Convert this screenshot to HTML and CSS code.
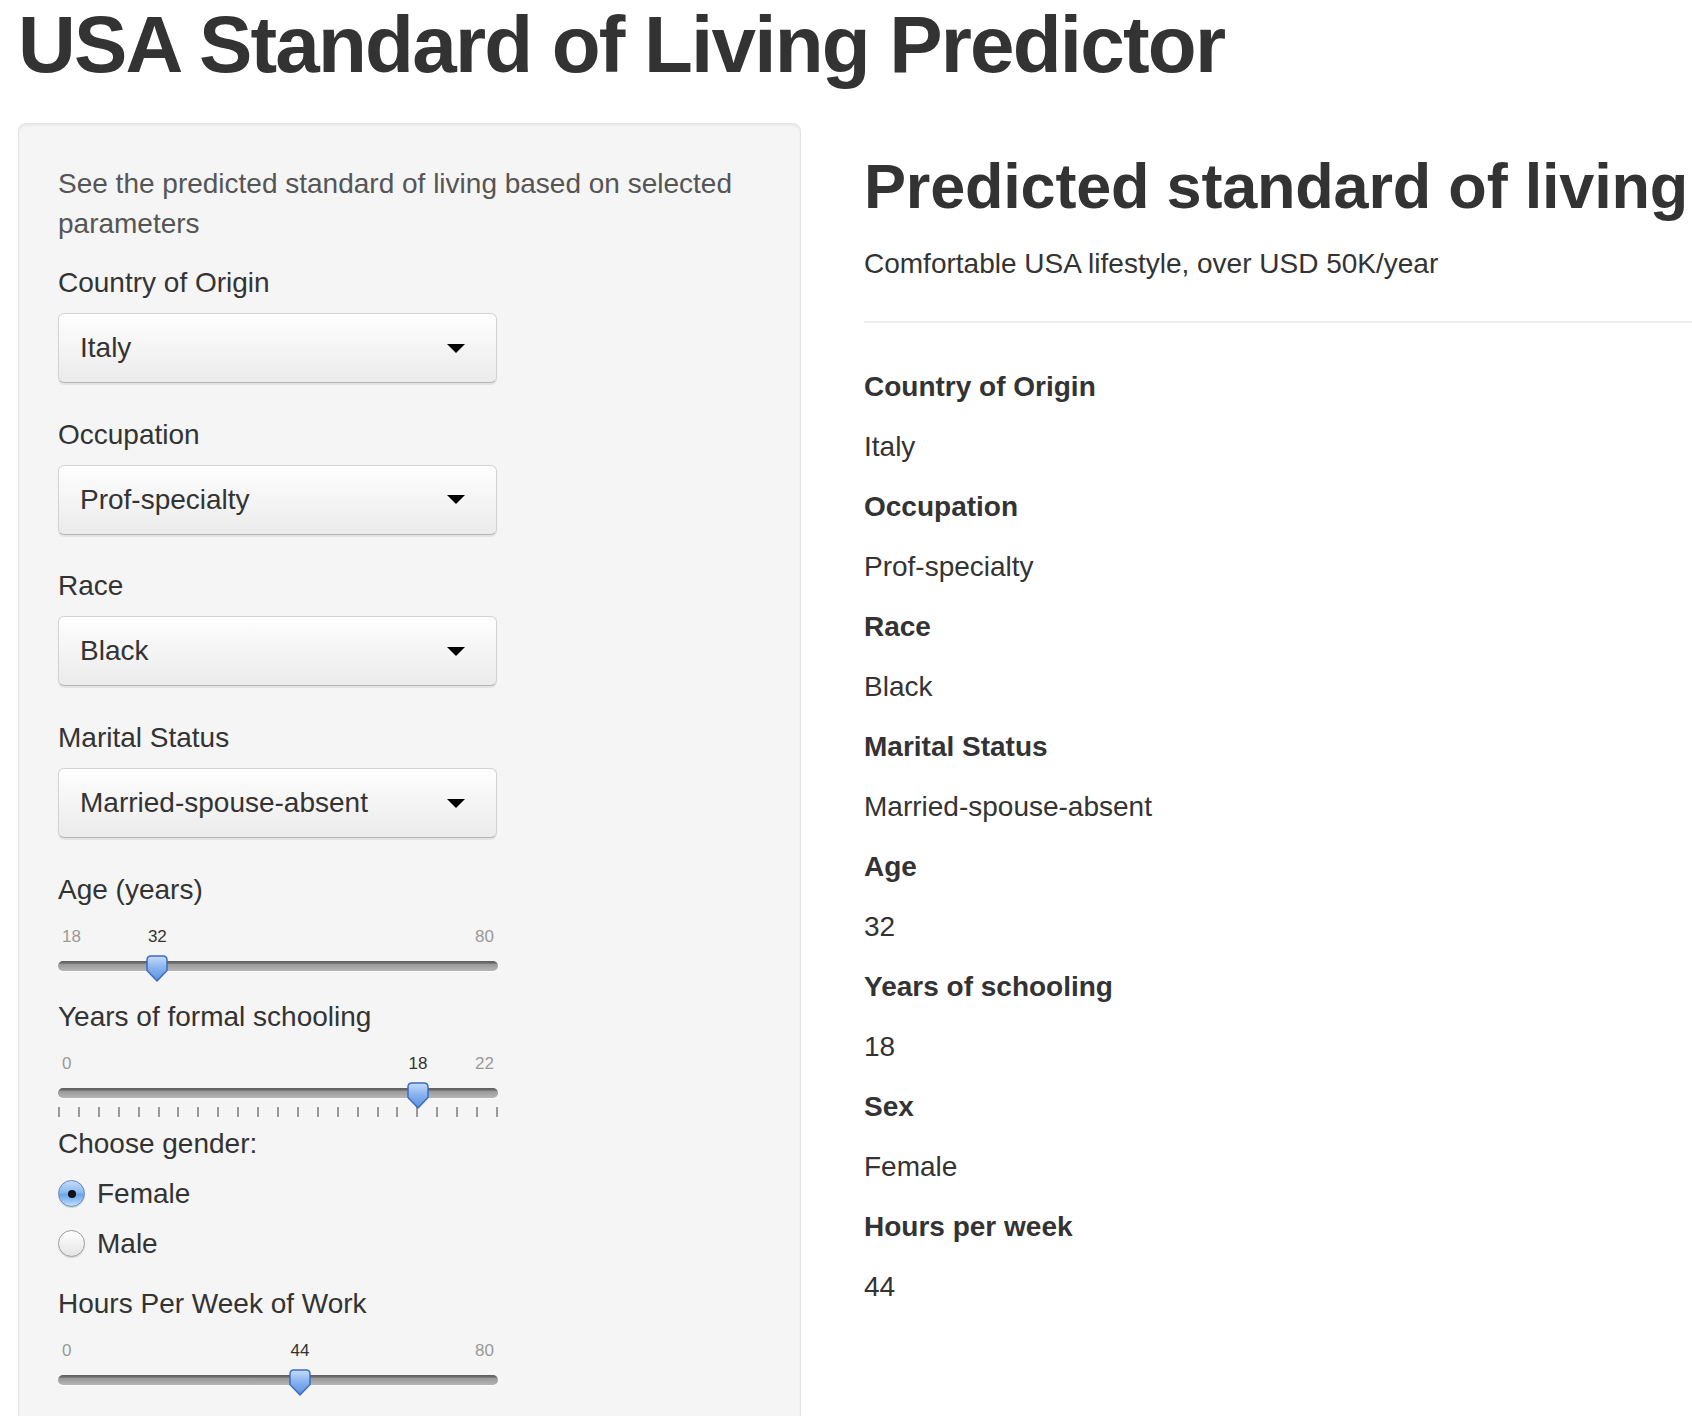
FILE: index.html
```html
<!DOCTYPE html>
<html lang="en">
<head>
<meta charset="utf-8">
<title>USA Standard of Living Predictor</title>
<link rel="stylesheet" href="styles.css">
</head>
<body>
<div class="page">
  <h1 class="title">USA Standard of Living Predictor</h1>
  <div class="row">
    <aside class="well">
      <p class="help">See the predicted standard of living based on selected parameters</p>

      <div class="group">
        <label class="group-label">Country of Origin</label>
        <div class="select"><span class="select-value">Italy</span><span class="caret"></span></div>
      </div>
      <div class="group">
        <label class="group-label">Occupation</label>
        <div class="select"><span class="select-value">Prof-specialty</span><span class="caret"></span></div>
      </div>
      <div class="group">
        <label class="group-label">Race</label>
        <div class="select"><span class="select-value">Black</span><span class="caret"></span></div>
      </div>
      <div class="group">
        <label class="group-label">Marital Status</label>
        <div class="select"><span class="select-value">Married-spouse-absent</span><span class="caret"></span></div>
      </div>

      <div class="group slider-group">
        <label class="group-label">Age (years)</label>
        <div class="slider" style="--p:22.58%">
          <div class="slider-scale"><span>18</span><span>80</span></div>
          <span class="slider-value">32</span>
          <div class="slider-bar"></div>
          <svg class="slider-thumb" viewBox="0 0 22 27"><defs><linearGradient id="tg1" x1="0" y1="0" x2="0" y2="1"><stop offset="0" stop-color="#c6ddfb"/><stop offset=".45" stop-color="#8ab4ef"/><stop offset="1" stop-color="#5a8fe0"/></linearGradient></defs><path d="M1,5 Q1,1 5,1 H17 Q21,1 21,5 V15.5 L11,26 L1,15.5 Z" fill="url(#tg1)" stroke="#3d6cc0" stroke-width="1.5" stroke-linejoin="round"/></svg>
        </div>
      </div>

      <div class="group slider-group has-grid">
        <label class="group-label">Years of formal schooling</label>
        <div class="slider" style="--p:81.82%">
          <div class="slider-scale"><span>0</span><span>22</span></div>
          <span class="slider-value">18</span>
          <div class="slider-bar"></div>
          <div class="slider-grid">
            <i class="tick"></i><i class="tick"></i><i class="tick"></i><i class="tick"></i><i class="tick"></i><i class="tick"></i><i class="tick"></i><i class="tick"></i><i class="tick"></i><i class="tick"></i><i class="tick"></i><i class="tick"></i><i class="tick"></i><i class="tick"></i><i class="tick"></i><i class="tick"></i><i class="tick"></i><i class="tick"></i><i class="tick"></i><i class="tick"></i><i class="tick"></i><i class="tick"></i><i class="tick"></i>
          </div>
          <svg class="slider-thumb" viewBox="0 0 22 27"><defs><linearGradient id="tg2" x1="0" y1="0" x2="0" y2="1"><stop offset="0" stop-color="#c6ddfb"/><stop offset=".45" stop-color="#8ab4ef"/><stop offset="1" stop-color="#5a8fe0"/></linearGradient></defs><path d="M1,5 Q1,1 5,1 H17 Q21,1 21,5 V15.5 L11,26 L1,15.5 Z" fill="url(#tg2)" stroke="#3d6cc0" stroke-width="1.5" stroke-linejoin="round"/></svg>
        </div>
      </div>

      <div class="group radio-group">
        <label class="group-label">Choose gender:</label>
        <div class="radio"><span class="radio-dot on"></span><span>Female</span></div>
        <div class="radio"><span class="radio-dot"></span><span>Male</span></div>
      </div>

      <div class="group slider-group">
        <label class="group-label">Hours Per Week of Work</label>
        <div class="slider" style="--p:55%">
          <div class="slider-scale"><span>0</span><span>80</span></div>
          <span class="slider-value">44</span>
          <div class="slider-bar"></div>
          <svg class="slider-thumb" viewBox="0 0 22 27"><defs><linearGradient id="tg3" x1="0" y1="0" x2="0" y2="1"><stop offset="0" stop-color="#c6ddfb"/><stop offset=".45" stop-color="#8ab4ef"/><stop offset="1" stop-color="#5a8fe0"/></linearGradient></defs><path d="M1,5 Q1,1 5,1 H17 Q21,1 21,5 V15.5 L11,26 L1,15.5 Z" fill="url(#tg3)" stroke="#3d6cc0" stroke-width="1.5" stroke-linejoin="round"/></svg>
        </div>
      </div>
    </aside>

    <main class="main">
      <h2 class="result-title">Predicted standard of living</h2>
      <p class="result-text">Comfortable USA lifestyle, over USD 50K/year</p>
      <hr class="divider">
      <p class="field">Country of Origin</p>
      <p class="value">Italy</p>
      <p class="field">Occupation</p>
      <p class="value">Prof-specialty</p>
      <p class="field">Race</p>
      <p class="value">Black</p>
      <p class="field">Marital Status</p>
      <p class="value">Married-spouse-absent</p>
      <p class="field">Age</p>
      <p class="value">32</p>
      <p class="field">Years of schooling</p>
      <p class="value">18</p>
      <p class="field">Sex</p>
      <p class="value">Female</p>
      <p class="field">Hours per week</p>
      <p class="value">44</p>
    </main>
  </div>
</div>
</body>
</html>
```

FILE: styles.css
```css
* { box-sizing: border-box; }

html, body {
  margin: 0;
  padding: 0;
  background: #fff;
}

body {
  font-family: "Liberation Sans", Arial, Helvetica, sans-serif;
  font-size: 28px;
  line-height: 40px;
  color: #333;
}

.page {
  padding-left: 18px;
}

.title {
  margin: 1px 0 34px 0;
  font-size: 80px;
  line-height: 88px;
  font-weight: 700;
  letter-spacing: -1.8px;
  white-space: nowrap;
}

.row {
  display: flex;
  align-items: flex-start;
  gap: 63px;
}

/* ---------- sidebar ---------- */
.well {
  flex: 0 0 783px;
  background: #f5f5f5;
  border: 1px solid #e3e3e3;
  border-radius: 8px;
  box-shadow: inset 0 2px 2px rgba(0, 0, 0, 0.05);
  padding: 40px 39px 60px;
}

.help {
  margin: 0 0 19px;
  color: #555;
}

.group {
  margin-bottom: 31.7px;
}

.group-label {
  display: block;
  margin-bottom: 10px;
}

.select {
  width: 439px;
  height: 70px;
  display: flex;
  align-items: center;
  padding: 0 31px 0 21px;
  border: 1px solid #d2d2d2;
  border-bottom-color: #b5b5b5;
  border-radius: 6px;
  background: linear-gradient(#fefefe, #ebebeb);
  box-shadow: 0 2px 1px rgba(0, 0, 0, 0.07), inset 0 1px 0 #fff;
}

.select-value {
  flex: 1;
}

.caret {
  width: 0;
  height: 0;
  border-left: 9px solid transparent;
  border-right: 9px solid transparent;
  border-top: 9px solid #000;
}

/* ---------- sliders ---------- */
.slider-group {
  margin-bottom: 26px;
}

.slider-group.has-grid {
  margin-bottom: 7px;
}

.slider {
  position: relative;
  width: 440px;
  padding-top: 10px;
}

.slider-scale {
  display: flex;
  justify-content: space-between;
  padding: 0 4px;
  font-size: 17px;
  line-height: 14px;
  color: #999;
}

.slider-value {
  position: absolute;
  top: 10px;
  left: var(--p);
  transform: translateX(-50%);
  font-size: 17px;
  line-height: 14px;
  color: #333;
}

.slider-bar {
  margin-top: 17px;
  height: 10px;
  border-radius: 5px;
  background: linear-gradient(#5c5c5c 0, #6c6c6c 20%, #9a9a9a 35%, #b6b6b6 100%);
  box-shadow: 0 1px 0 rgba(255, 255, 255, 0.6);
}

.slider-thumb {
  position: absolute;
  top: 35px;
  left: calc(var(--p) - 11px);
  width: 22px;
  height: 27px;
}

.slider-grid {
  display: flex;
  justify-content: space-between;
  margin-top: 9px;
  height: 10px;
}

.tick {
  display: block;
  width: 2px;
  height: 10px;
  background: #9a9a9a;
}

/* ---------- radios ---------- */
.radio-group {
  margin-bottom: 20px;
}

.radio {
  display: flex;
  align-items: center;
  gap: 12px;
  height: 40px;
}

.radio + .radio {
  margin-top: 10px;
}

.radio-dot {
  position: relative;
  flex: 0 0 27px;
  width: 27px;
  height: 27px;
  border-radius: 50%;
  border: 1px solid #9c9c9c;
  background: linear-gradient(#ffffff, #e4e4e4);
  box-shadow: 0 1px 1px rgba(0, 0, 0, 0.15);
}

.radio-dot.on {
  border-color: #6787b0;
  background: linear-gradient(#c4dcf8 0, #8dbaf0 45%, #6aa4ec 55%, #bfe0fb 100%);
}

.radio-dot.on::after {
  content: "";
  position: absolute;
  left: 50%;
  top: 50%;
  width: 8px;
  height: 8px;
  margin: -4px 0 0 -4px;
  border-radius: 50%;
  background: #111;
}

/* ---------- main ---------- */
.main {
  flex: 1;
  min-width: 0;
  padding-top: 29px;
}

.result-title {
  margin: 0 0 24px;
  font-size: 63px;
  line-height: 68px;
  font-weight: 700;
  letter-spacing: -0.2px;
  white-space: nowrap;
}

.result-text {
  margin: 0;
}

.divider {
  margin: 37px 0 44px;
  border: 0;
  border-top: 2px solid #eee;
  height: 0;
}

.field {
  margin: 0 0 20px;
  font-weight: 700;
}

.value {
  margin: 0 0 20px;
}
```
